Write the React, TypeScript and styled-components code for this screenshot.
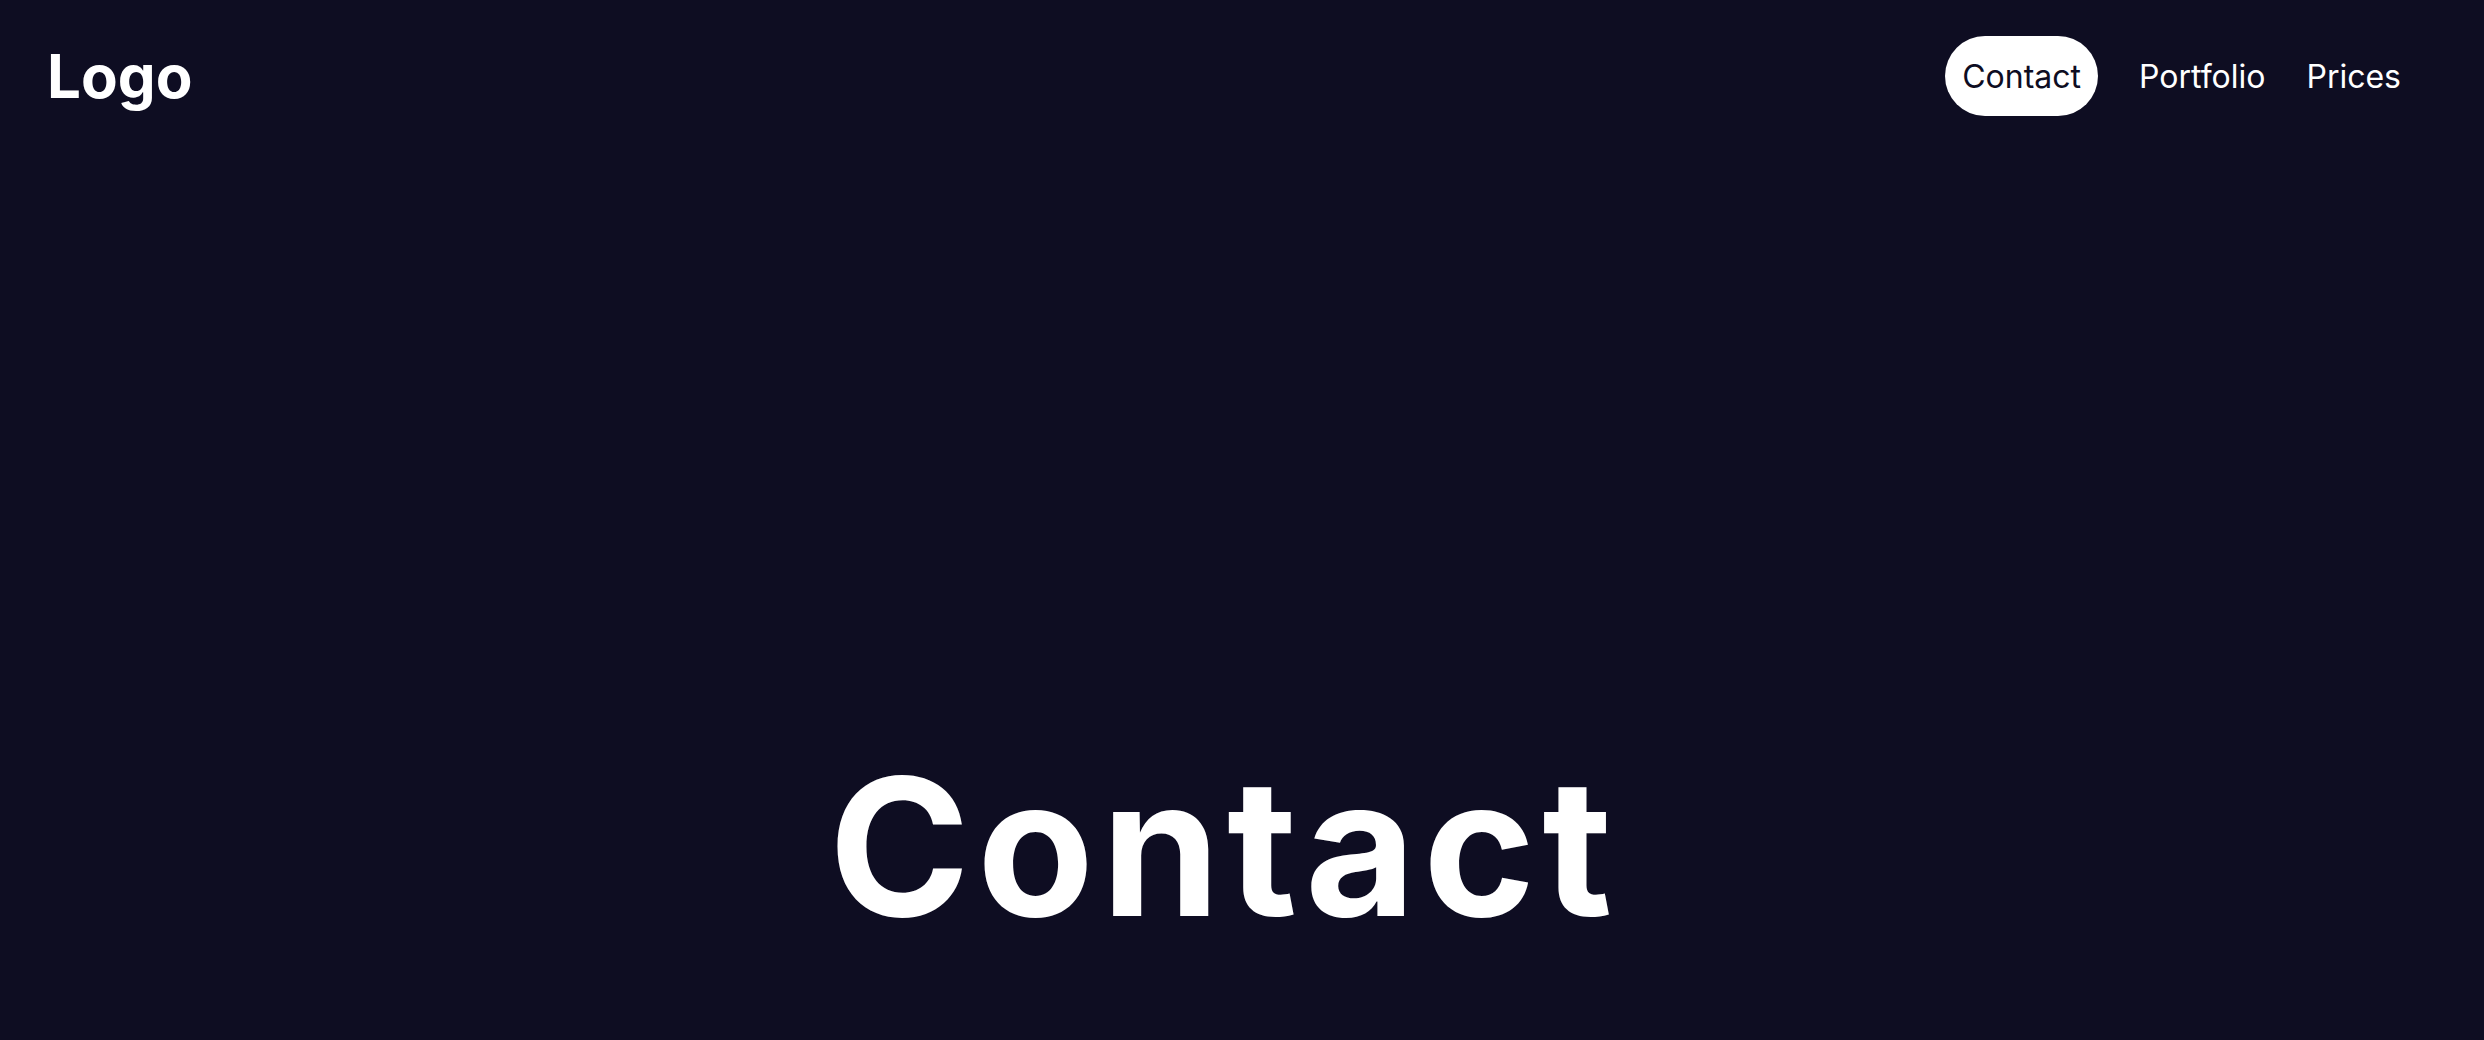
import React from "react";
import styled, { createGlobalStyle } from "styled-components";

const GlobalStyle = createGlobalStyle`
  html, body { margin: 0; padding: 0; background: #0e0d22; }
  body { font-family: Inter, "Noto Sans", sans-serif; color: #ffffff; }
  * { box-sizing: border-box; }
`;

const Page = styled.div`
  min-height: 100vh;
  display: flex;
  flex-direction: column;
  background: #0e0d22;
`;

const Header = styled.header`
  display: flex;
  align-items: center;
  justify-content: space-between;
  padding: 36px 83px 0 47px;
`;

const Logo = styled.div`
  font-family: Inter, sans-serif;
  font-weight: 700;
  font-size: 60px;
  line-height: 1;
  color: #ffffff;
`;

const Nav = styled.nav`
  display: flex;
  align-items: center;
  gap: 41px;
`;

const NavItem = styled.a<{ $active?: boolean }>`
  display: flex;
  align-items: center;
  height: 80px;
  padding: ${(p) => (p.$active ? "0 17px" : "0")};
  border-radius: 40px;
  font-family: Inter, sans-serif;
  font-size: 32px;
  font-weight: 400;
  text-decoration: none;
  cursor: pointer;
  background: ${(p) => (p.$active ? "#ffffff" : "transparent")};
  color: ${(p) => (p.$active ? "#0e0d22" : "#ffffff")};
`;

const Hero = styled.main`
  flex: 1;
  display: flex;
  align-items: flex-end;
  justify-content: center;
  padding: 0 36px 98px 0;
`;

const Title = styled.h1`
  margin: 0;
  font-family: Inter, sans-serif;
  font-weight: 700;
  font-size: 191px;
  line-height: 1;
  letter-spacing: 7px;
  color: #ffffff;
`;

export default function App() {
  return (
    <>
      <GlobalStyle />
      <Page>
        <Header>
          <Logo>Logo</Logo>
          <Nav>
            <NavItem $active>Contact</NavItem>
            <NavItem>Portfolio</NavItem>
            <NavItem>Prices</NavItem>
          </Nav>
        </Header>
        <Hero>
          <Title>Contact</Title>
        </Hero>
      </Page>
    </>
  );
}
